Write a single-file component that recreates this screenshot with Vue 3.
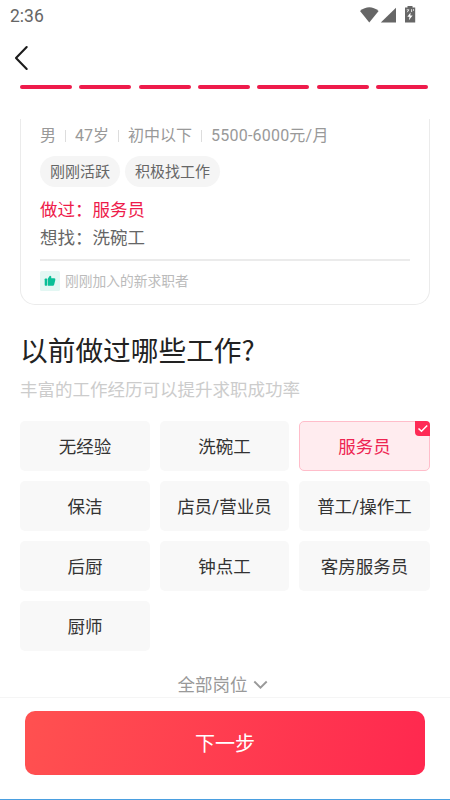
<script setup>
const steps = 7
const facts = ['男', '47岁', '初中以下', '5500-6000元/月']
const tags = ['刚刚活跃', '积极找工作']
const jobs = ['无经验', '洗碗工', '服务员', '保洁', '店员/营业员', '普工/操作工', '后厨', '钟点工', '客房服务员', '厨师']
const selected = '服务员'
</script>

<template>
  <div class="screen">
    <header class="status">
      <span class="time">2:36</span>
      <svg class="status-icons" width="56" height="18" viewBox="0 0 56 18">
        <path d="M0 5Q9.300-2.500 18.600 5L9.300 16.400Z" fill="#666" />
        <path d="M36 1.800V16.500H20.800Z" fill="#666" />
        <path d="M47.500 0h5v1.500h2.700v15H45V1.500h2.500Z" fill="#666" />
        <path d="M50.600 6.500L47.300 10.700h2.200l-.6 3.600 3.700-4.900h-2.300Z" fill="#fff" />
        <path d="M46.700 3.800h2.200l-1.700 2.400M51.600 3.200v2.800M53.500 3.200v1.600" fill="none" stroke="#eee" stroke-width=".9" />
      </svg>
    </header>
    <nav class="nav">
      <svg width="15" height="26" viewBox="0 0 15 26">
        <path d="M12.700 2L2 13L12.700 24" fill="none" stroke="#1c1c1c" stroke-width="2.100" stroke-linecap="round" stroke-linejoin="round" />
      </svg>
    </nav>
    <div class="steps"><i v-for="n in steps" :key="n"></i></div>

    <section class="card">
      <div class="facts"><span v-for="f in facts" :key="f">{{ f }}</span></div>
      <div class="tags"><span v-for="t in tags" :key="t">{{ t }}</span></div>
      <p class="line done">做过：服务员</p>
      <p class="line">想找：洗碗工</p>
      <div class="joined">
        <svg width="20" height="20" viewBox="0 0 20 20">
          <rect width="20" height="20" rx="1.500" fill="#e3f7f3" />
          <rect x="4.700" y="7.500" width="2.500" height="7.200" rx=".7" fill="#0abf97" />
          <path d="M7.800 7.800L9.600 4.900Q11.700 4.500 11.300 7.200H14.400Q15.700 7.400 15.300 8.900L14.200 13.500Q13.900 14.700 12.900 14.700H7.800Z" fill="#0abf97" />
        </svg>
        <span>刚刚加入的新求职者</span>
      </div>
    </section>

    <h1>以前做过哪些工作?</h1>
    <p class="sub">丰富的工作经历可以提升求职成功率</p>

    <div class="grid">
      <button v-for="job in jobs" :key="job" class="job" :class="{ active: job === selected }">
        <span>{{ job }}</span>
        <svg v-if="job === selected" class="check" width="15" height="15" viewBox="0 0 15 15">
          <path d="M0 0H11Q15 0 15 4V15H4Q0 15 0 11Z" fill="#fe2a55" />
          <path d="M3.500 7.500L6.500 10.300L12.200 4.500" fill="none" stroke="#fff" stroke-width="1.500" />
        </svg>
      </button>
    </div>

    <div class="all">
      <span>全部岗位</span>
      <svg width="15" height="10" viewBox="0 0 15 10">
        <path d="M1.300 1.500L7.500 7.700L13.700 1.500" fill="none" stroke="#999" stroke-width="1.900" />
      </svg>
    </div>

    <footer class="footer"><button class="next">下一步</button></footer>
  </div>
</template>

<style>
body { margin: 0; background: #fff; }
</style>

<style scoped>
* { box-sizing: border-box; }
.screen {
  width: 450px;
  height: 800px;
  display: flex;
  flex-direction: column;
  overflow: hidden;
  background: #fff;
  color: #333;
  font-family: Roboto, "Noto Sans CJK SC", sans-serif;
}
.status {
  height: 32px;
  flex: none;
  display: flex;
  justify-content: space-between;
  padding: 6px 34px 0 10px;
}
.time { font-size: 17.500px; line-height: 20px; color: #666; }
.status-icons { display: block; }
.nav { height: 53px; flex: none; padding: 13px 0 0 14px; }
.nav svg { display: block; }
.steps {
  flex: none;
  display: flex;
  gap: 7.500px;
  padding: 0 22px 0 20px;
}
.steps i { flex: 1; height: 4px; border-radius: 2px; background: #ee1b4b; }
.card {
  flex: none;
  height: 186px;
  margin: 30px 20px 0;
  padding: 5px 19px 0;
  border: 1px solid #ebebeb;
  border-top: 0;
  border-radius: 0 0 15px 15px;
}
.facts {
  display: flex;
  align-items: center;
  height: 24px;
  font-size: 16px;
  line-height: 24px;
  color: #999;
}
.facts span { display: flex; align-items: center; }
.facts span:last-child { letter-spacing: .22px; }
.facts span + span::before {
  content: "";
  width: 1px;
  height: 12px;
  margin: 0 9px;
  background: #ddd;
}
.tags { display: flex; gap: 5px; margin-top: 8px; }
.tags span {
  height: 31px;
  padding: 1px 10px 0;
  border-radius: 16px;
  background: #f5f5f5;
  color: #666;
  font-size: 15px;
  line-height: 31px;
}
.line { margin: 0; font-size: 17.500px; line-height: 28px; color: #666; }
.done { margin-top: 9px; color: #ee1b4b; }
.joined {
  display: flex;
  align-items: center;
  gap: 5px;
  margin-top: 7px;
  padding-top: 10px;
  border-top: 2px solid #ebebeb;
  color: #bbb;
  font-size: 13.750px;
  line-height: 20px;
}
h1 {
  flex: none;
  margin: 24px 20px 0;
  font-family: "Noto Sans CJK SC", sans-serif;
  font-size: 27.700px;
  font-weight: 400;
  line-height: 40px;
  color: #222;
}
.sub {
  flex: none;
  margin: 8px 20px 0;
  font-size: 17.500px;
  line-height: 26px;
  color: #ccc;
}
.grid {
  flex: none;
  display: grid;
  grid-template-columns: 130px 129px 131px;
  grid-auto-rows: 50px;
  gap: 10px;
  padding: 18px 20px 0;
}
button { font: inherit; border: 0; padding: 0; }
.job {
  position: relative;
  padding-bottom: 2px;
  border-radius: 5px;
  background: #f8f8f8;
  color: #333;
  font-size: 17.500px;
}
.active { border: 1px solid #ffbdca; background: #ffecef; color: #ee2452; }
.check { position: absolute; top: -1px; right: -1px; }
.all {
  flex: none;
  height: 46px;
  display: flex;
  align-items: center;
  justify-content: center;
  gap: 5px;
  padding-top: 21px;
  padding-right: 5px;
  font-size: 17.500px;
  line-height: 26px;
  color: #999;
}
.footer {
  flex: none;
  height: 103px;
  padding: 12.500px 25px 0;
  border-top: 1px solid #f5f5f5;
  border-bottom: 1px solid #4a9fe0;
}
.next {
  display: block;
  width: 400px;
  height: 64.500px;
  border-radius: 10px;
  background: linear-gradient(105deg, #ff5150, #ff284f);
  color: #fff;
  font-size: 20px;
}
</style>
